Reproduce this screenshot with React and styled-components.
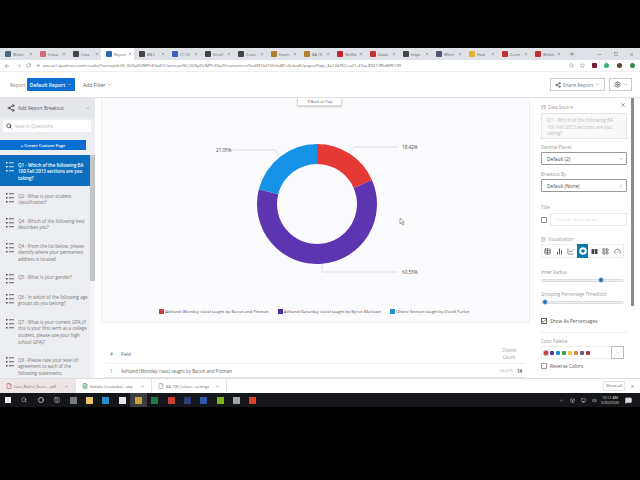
import styled, { createGlobalStyle } from 'styled-components';
import { ArrowLeft, ArrowRight, RotateCw, Lock, Star, Search, Share2, Settings, ChevronDown, X, Plus, Minus, Square, Table, BarChart2, LineChart, LayoutGrid, Gauge, Database, Check, ChevronUp, Circle, Monitor, Volume2, MessageSquare, File, FileText, Image, Columns2, Box } from 'lucide-react';

const GlobalStyle = createGlobalStyle`
  html, body { margin: 0; padding: 0; background: #000; }
  * { box-sizing: border-box; }
  body { font-family: "Open Sans", "Liberation Sans", sans-serif; }
`;

const tabs = [
  ['Webvi', '#4a6a7a', 35], ['Inbox', '#d66a7a', 33], ['Cesa', '#444', 33], ['Report', '#2a6ab0', 33],
  ['BB L', '#444', 33], ['(1) 15', '#3a62c0', 33], ['Enroll', '#444', 33], ['Cours', '#444', 33],
  ['Exam', '#b08030', 33], ['BA 10', '#b08030', 33], ['Netflix', '#c02030', 33], ['Goals', '#c03030', 33],
  ['https', '#444', 33], ['When', '#557', 33], ['How', '#e8b030', 33], ['Zoom', '#c03030', 33], ['Webin', '#c03030', 33],
];

const questions = [
  { id: 1, text: 'Q1 - Which of the following BA 100 Fall 2013 sections are you taking?', active: true },
  { id: 2, text: 'Q2 - What is your student classification?', gap: 7 },
  { id: 3, text: 'Q4 - Which of the following best describes you?', gap: 11.6 },
  { id: 4, text: 'Q4 - From the list below, please identify where your permanent address is located', gap: 11.6 },
  { id: 5, text: 'Q5 - What is your gender?', gap: 11.2 },
  { id: 6, text: 'Q6 - In which of the following age groups do you belong?', gap: 13 },
  { id: 7, text: 'Q7 - What is your current GPA (if this is your first term as a college student, please use your high school GPA)?', gap: 11.6 },
  { id: 8, text: 'Q8 - Please rate your level of agreement to each of the following statements', gap: 11.3 },
];

const palette = ['#c8413a', '#5b35a5', '#1a8fdc', '#3f9a55', '#f2c744', '#e08a3c', '#5a6470', '#b5305a'];
const taskIcons = ['#777b80', '#e9c46a', '#2a8fc8', '#e8e8e8', '#c9a13a', '#1f7a45', '#c8402e', '#2a3f7a', '#2a5aa8', '#7ab51d', '#9aa5ad', '#d8432e'];

// donut centre inside the chart svg
const CX = 215;
const CY = 106;

function polar(r, pct) {
  const a = (pct / 100) * Math.PI * 2;
  return [CX + r * Math.sin(a), CY - r * Math.cos(a)];
}

function slice(from, to) {
  const [a, b] = polar(60, from);
  const [c, d] = polar(60, to);
  const [e, f] = polar(40, to);
  const [g, h] = polar(40, from);
  const large = to - from > 50 ? 1 : 0;
  return `M${a} ${b}A60 60 0 ${large} 1 ${c} ${d}L${e} ${f}A40 40 0 ${large} 0 ${g} ${h}Z`;
}

function ListIcon() {
  return (
    <svg width="9" height="11" viewBox="0 0 9 11">
      <g fill="currentColor">
        <rect x="0" y="1" width="1.5" height="1.5" />
        <rect x="0" y="5" width="1.5" height="1.5" />
        <rect x="0" y="9" width="1.5" height="1.5" />
        <rect x="3" y="1.4" width="5" height=".8" />
        <rect x="3" y="5.4" width="5" height=".8" />
        <rect x="3" y="9.4" width="5" height=".8" />
      </g>
    </svg>
  );
}

function DonutGlyph() {
  return (
    <svg width="8" height="8" viewBox="0 0 8 8">
      <circle cx="4" cy="4" r="2.800" fill="none" stroke="currentColor" strokeWidth="2" />
    </svg>
  );
}

function BlocksGlyph() {
  return (
    <svg width="7" height="7" viewBox="0 0 7 7">
      <rect x=".5" y="1" width="2.700" height="5" fill="currentColor" />
      <rect x="3.800" y="1" width="2.700" height="5" fill="currentColor" />
    </svg>
  );
}

export default function App() {
  return (
    <Screen>
      <GlobalStyle />
      <TopBlack />
      <TabStrip>
        {tabs.map(([label, color, w]) => (
          <Tab key={label} $active={label === 'Report'} $w={w}>
            <Favicon $color={color} />
            <TabLabel>{label}</TabLabel>
            <X size={4} strokeWidth={2} color="#555" />
          </Tab>
        ))}
        <NewTab><Plus size={6} color="#555" /></NewTab>
        <WindowControls>
          <Minus size={5} color="#555" />
          <Square size={4} color="#555" />
          <X size={5} color="#555" />
        </WindowControls>
      </TabStrip>
      <AddressBar>
        <Slot $w={13}><ArrowLeft size={6} color="#666" /></Slot>
        <Slot $w={11}><ArrowRight size={6} color="#aaa" /></Slot>
        <Slot $w={9}><RotateCw size={5} color="#666" /></Slot>
        <Slot $w={10}><Lock size={3} color="#555" /></Slot>
        <Url>asu.az1.qualtrics.com/results/?surveyId=SV_0U0pDUMfTrE0aiD#/surveys/SV_0U0pDUMfTrE0aiD/containers/5ed391b215fcfa481c6cbed5/pages/Page_6a12d762-ca21-47aa-8927-ff5d6ff5190</Url>
        <Spacer />
        <Slot $w={10}><Search size={5} color="#777" /></Slot>
        <Slot $w={12}><Star size={5} color="#777" /></Slot>
        <Slot $w={12}><ExtIcon $color="#7a1f2a" /></Slot>
        <Slot $w={12}><ExtIcon $color="#3aae78" $round /></Slot>
        <Slot $w={14}><ExtIcon $color="#5a4632" $round /></Slot>
        <Slot $w={12}><ExtIcon $color="#2a8a4a" $round /></Slot>
        <Slot $w={2} />
      </AddressBar>
      <Toolbar>
        <ToolLabel>Report</ToolLabel>
        <PrimaryButton>Default Report <ChevronDown size={5} /></PrimaryButton>
        <FilterButton>Add Filter <ChevronDown size={5} /></FilterButton>
        <Spacer />
        <OutlineButton $w={55}><Share2 size={6} color="#333" /> Share Report <ChevronDown size={5} /></OutlineButton>
        <OutlineButton $w={23}><Settings size={7} color="#333" /> <ChevronDown size={5} /></OutlineButton>
      </Toolbar>
      <Body>
        <Sidebar>
          <BreakoutRow>
            <Share2 size={8} color="#333" />
            <span>Add Report Breakout</span>
            <Spacer />
            <ChevronDown size={5} color="#777" />
          </BreakoutRow>
          <SearchBox><Search size={6} color="#333" strokeWidth={3} /><span>Search Questions</span></SearchBox>
          <CreateButton>+ Create Custom Page</CreateButton>
          <QuestionList>
            <Questions>
              {questions.map((q) => (
                <Question key={q.id} $active={q.active} $gap={q.gap}>
                  <ListIcon />
                  <span>{q.text}</span>
                </Question>
              ))}
            </Questions>
            <ScrollTrack><ScrollThumb /></ScrollTrack>
          </QuestionList>
        </Sidebar>
        <Main>
          <ChartCard>
            <BackToTop>⇑ Back to Top</BackToTop>
            <DonutBox>
              <svg width="428" height="206" viewBox="0 0 428 206">
                <path d={slice(0, 18.42)} fill="#e53935" />
                <path d={slice(18.42, 78.95)} fill="#5e35b1" />
                <path d={slice(78.95, 100)} fill="#1592e6" />
                <g fill="none" stroke="#ccc" strokeWidth=".6">
                  <path d="M248 54 L252 49 H296" />
                  <path d="M177 58 L173 52 H131" />
                  <path d="M220 166 V174 H295" />
                </g>
                <g fontFamily="Open Sans" fontSize="4.600" fill="#444">
                  <text x="300" y="51">18.42%</text>
                  <text x="114" y="54">21.05%</text>
                  <text x="300" y="176">60.53%</text>
                </g>
                <path d="M298 120 v6 l1.500-1.500 l1.200 2.500 l1-.5 l-1.200-2.400 h2z" fill="#fff" stroke="#555" strokeWidth=".5" />
              </svg>
            </DonutBox>
            <Legend>
              <LegendItem $color="#c8413a">Ashland (Monday class) taught by Bacon and Pittman</LegendItem>
              <LegendItem $color="#4a2d90">Ashland (Saturday class) taught by Byron Marlowe</LegendItem>
              <LegendItem $color="#1a8fc8">Online Section taught by David Parker</LegendItem>
            </Legend>
          </ChartCard>
          <ResultTable>
            <HeadRow>
              <NumCell>#</NumCell>
              <FieldCell>Field</FieldCell>
              <CountHead>Choice<br />Count</CountHead>
            </HeadRow>
            <DataRow>
              <NumCell>1</NumCell>
              <FieldCell>Ashland (Monday class) taught by Bacon and Pittman</FieldCell>
              <Percent>18.42%</Percent>
              <Count>14</Count>
            </DataRow>
          </ResultTable>
        </Main>
        <Panel>
          <CloseSlot><X size={6} color="#555" /></CloseSlot>
          <PanelLabel><Database size={5} /> Data Source</PanelLabel>
          <DisabledBox>Q1 - Which of the following BA 100 Fall 2013 sections are you taking?<DisabledCaret><ChevronDown size={4} /></DisabledCaret></DisabledBox>
          <PanelLabel $top={5}>Decimal Places</PanelLabel>
          <SelectBox>Default (2)<ChevronDown size={4} /></SelectBox>
          <PanelLabel $top={6}>Breakout By</PanelLabel>
          <SelectBox>Default (None)<ChevronDown size={4} /></SelectBox>
          <PanelLabel $top={12}>Title</PanelLabel>
          <TitleRow>
            <CheckBox />
            <TitleInput>Default - Value as set</TitleInput>
          </TitleRow>
          <PanelLabel $top={10}><Image size={5} /> Visualization</PanelLabel>
          <VizBar>
            <VizCell><Table size={7} /></VizCell>
            <VizCell><BarChart2 size={7} strokeWidth={3} /></VizCell>
            <VizCell><LineChart size={7} /></VizCell>
            <VizCell $active><DonutGlyph /></VizCell>
            <VizCell><BlocksGlyph /></VizCell>
            <VizCell><LayoutGrid size={7} /></VizCell>
            <VizCell><Gauge size={7} /></VizCell>
          </VizBar>
          <PanelLabel $top={11}>Inner Radius</PanelLabel>
          <Slider><Knob $pos={69} /></Slider>
          <PanelLabel $top={9}>Grouping Percentage Threshold</PanelLabel>
          <Slider><Knob $pos={0} /></Slider>
          <CheckRow $top={13.5}><CheckBox $on><Check size={6} strokeWidth={3} /></CheckBox>Show As Percentages</CheckRow>
          <Divider />
          <PanelLabel $top={5}>Color Palette</PanelLabel>
          <PaletteRow>
            <Swatches>
              {palette.map((c, i) => <Swatch key={c} $color={c} $first={i === 0} />)}
            </Swatches>
            <PaletteCaret><ChevronDown size={4} /></PaletteCaret>
          </PaletteRow>
          <CheckRow $top={3}><CheckBox />Reverse Colors</CheckRow>
        </Panel>
        <PanelScroll><PanelThumb /></PanelScroll>
      </Body>
      <DownloadBar>
        <DownloadItem $w={76} $pink><File size={6} color="#c0392b" /><span>Cass_Rachel_Score....pdf</span><ChevronUp size={5} /></DownloadItem>
        <DownloadItem $w={76}><FileText size={6} color="#1f7a45" /><span>Sample Crosstabul....xlsx</span><ChevronUp size={5} /></DownloadItem>
        <DownloadItem $w={75}><File size={6} color="#888" /><span>BA_100_Colour....settings</span><ChevronUp size={5} /></DownloadItem>
        <Spacer />
        <ShowAll>Show all</ShowAll>
        <X size={5} color="#555" />
      </DownloadBar>
      <Taskbar>
        <TaskSlot><WinLogo /></TaskSlot>
        <TaskSlot><Search size={6} color="#ddd" /></TaskSlot>
        <TaskSlot><Circle size={6} color="#ddd" strokeWidth={3} /></TaskSlot>
        <TaskSlot><Columns2 size={6} color="#ddd" /></TaskSlot>
        {taskIcons.map((c, i) => <TaskSlot key={i} $active={i === 4}><TaskIcon $color={c} /></TaskSlot>)}
        <Spacer />
        <Slot $w={11}><ChevronUp size={5} color="#ddd" /></Slot>
        <Slot $w={11}><Box size={5} color="#ddd" /></Slot>
        <Slot $w={11}><Monitor size={5} color="#ddd" /></Slot>
        <Slot $w={10}><Volume2 size={5} color="#ddd" /></Slot>
        <Clock>10:12 AM<br />5/30/2020</Clock>
        <Slot $w={14}><MessageSquare size={7} color="#ddd" fill="#ddd" /></Slot>
        <Slot $w={5} />
      </Taskbar>
    </Screen>
  );
}

const Screen = styled.div`
  width: 640px;
  height: 480px;
  overflow: hidden;
  background: #000;
  display: flex;
  flex-direction: column;
`;

const TopBlack = styled.div`
  height: 48px;
  flex: none;
`;

const TabStrip = styled.div`
  height: 12px;
  flex: none;
  background: #dee1e6;
  display: flex;
  align-items: center;
`;

const Tab = styled.div`
  width: ${({ $w }) => $w}px;
  height: 12px;
  flex: none;
  padding: 0 2px 0 5px;
  display: flex;
  align-items: center;
  gap: 2px;
  background: ${({ $active }) => ($active ? '#fff' : 'transparent')};

  svg {
    flex: none;
  }
`;

const Favicon = styled.span`
  width: 6px;
  height: 6px;
  flex: none;
  border-radius: 1px;
  background: ${({ $color }) => $color};
`;

const TabLabel = styled.span`
  flex: 1;
  font-size: 3.800px;
  color: #666;
  white-space: nowrap;
`;

const NewTab = styled.span`
  margin-left: 6px;
  display: flex;
`;

const WindowControls = styled.div`
  margin: 0 6px 0 auto;
  width: 37px;
  display: flex;
  justify-content: space-between;
  align-items: center;
`;

const AddressBar = styled.div`
  height: 12px;
  flex: none;
  background: #fff;
  display: flex;
  align-items: center;
  border-bottom: 1px solid #eee;
`;

const Slot = styled.span`
  width: ${({ $w }) => $w}px;
  flex: none;
  display: flex;
  align-items: center;
  justify-content: center;
`;

const Url = styled.div`
  flex: none;
  font-size: 4.100px;
  color: #666;
  white-space: nowrap;
`;

const ExtIcon = styled.span`
  width: 5px;
  height: 5px;
  flex: none;
  background: ${({ $color }) => $color};
  border-radius: ${({ $round }) => ($round ? '50%' : '1px')};
`;

const Toolbar = styled.div`
  height: 25px;
  flex: none;
  background: #fff;
  display: flex;
  align-items: center;
  padding: 0 8px 0 10px;
  font-size: 5px;
`;

const ToolLabel = styled.span`
  color: #888;
  width: 17px;
`;

const PrimaryButton = styled.div`
  width: 48px;
  height: 13px;
  background: #0b6ed0;
  color: #fff;
  font-weight: 600;
  border-radius: 1px;
  display: flex;
  align-items: center;
  justify-content: center;
  gap: 2px;
`;

const FilterButton = styled.div`
  margin-left: 8px;
  color: #555;
  display: flex;
  align-items: center;
  gap: 2px;
`;

const Spacer = styled.div`
  flex: 1;
`;

const OutlineButton = styled.div`
  width: ${({ $w }) => $w}px;
  height: 13px;
  margin-left: 4px;
  border: 1px solid #ccc;
  color: #777;
  display: flex;
  align-items: center;
  justify-content: center;
  gap: 2px;
`;

const Body = styled.div`
  height: 281px;
  flex: none;
  background: #fff;
  display: flex;
  border-top: 1px solid #e4e4e8;
`;

const Sidebar = styled.aside`
  width: 95px;
  flex: none;
  background: #eceef1;
  display: flex;
  flex-direction: column;
  min-height: 0;
`;

const BreakoutRow = styled.div`
  height: 20px;
  flex: none;
  padding: 0 5px 0 7px;
  background: #e6e7ea;
  display: flex;
  align-items: center;
  gap: 3px;
  font-size: 4.700px;
  color: #555;
`;

const SearchBox = styled.div`
  margin: 2px 4px 0 3px;
  height: 12px;
  flex: none;
  background: #fff;
  display: flex;
  align-items: center;
  gap: 3px;
  padding-left: 3px;
  font-size: 4.700px;
  color: #bbb;
`;

const CreateButton = styled.div`
  margin: 8px 9px 0 0;
  height: 10px;
  flex: none;
  background: #0b6ed0;
  color: #fff;
  font-size: 4.200px;
  font-weight: 600;
  display: flex;
  align-items: center;
  justify-content: center;
`;

const QuestionList = styled.div`
  flex: 1;
  min-height: 0;
  margin-top: 5px;
  display: flex;
  overflow: hidden;
`;

const Questions = styled.div`
  width: 90px;
  flex: none;
`;

const Question = styled.div`
  display: flex;
  gap: 3px;
  margin-top: ${({ $gap }) => $gap || 0}px;
  padding: ${({ $active }) => ($active ? '6.500px 0 4px 6px' : '0 0 0 6px')};
  background: ${({ $active }) => ($active ? '#0b6ebd' : 'transparent')};
  color: ${({ $active }) => ($active ? '#fff' : '#777')};
  font-size: 4.500px;
  line-height: 6.700px;
  font-weight: ${({ $active }) => ($active ? 600 : 400)};

  svg {
    flex: none;
    margin: -1px 0 -4px;
    color: ${({ $active }) => ($active ? '#fff' : '#444')};
  }
`;

const ScrollTrack = styled.div`
  width: 5px;
  background: #f4f4f6;
  margin-top: -15px;
`;

const ScrollThumb = styled.div`
  height: 141px;
  background: #c4c5c9;
`;

const Main = styled.main`
  flex: 1;
  min-width: 0;
  padding-left: 6px;
  display: flex;
  flex-direction: column;
`;

const ChartCard = styled.section`
  position: relative;
  width: 429px;
  height: 225px;
  flex: none;
  background: #fbfbfe;
  border: 1px solid #eeeef2;
  border-top: 0;
  display: flex;
  flex-direction: column;
`;

const BackToTop = styled.div`
  position: absolute;
  top: 0;
  left: 195px;
  width: 45px;
  height: 8px;
  background: #fff;
  border: 1px solid #ddd;
  border-top: 0;
  box-shadow: 0 1px 2px rgba(0, 0, 0, .2);
  font-size: 4px;
  color: #555;
  text-align: center;
  line-height: 7px;
`;

const DonutBox = styled.div`
  height: 206px;
  flex: none;
`;

const Legend = styled.div`
  display: flex;
  justify-content: center;
  gap: 9px;
  margin-top: 5px;
  padding-right: 2px;
`;

const LegendItem = styled.div`
  display: flex;
  align-items: center;
  gap: 1px;
  font-size: 4.200px;
  color: #555;
  white-space: nowrap;

  &::before {
    content: '';
    width: 5px;
    height: 5px;
    background: ${({ $color }) => $color};
  }
`;

const ResultTable = styled.div`
  width: 420px;
  margin: 21px 0 0 4px;
  font-size: 4.500px;
  color: #666;
`;

const HeadRow = styled.div`
  height: 20px;
  display: flex;
  align-items: center;
  border-bottom: 1px solid #eee;
`;

const DataRow = styled.div`
  height: 14px;
  display: flex;
  align-items: center;
  border-bottom: 1px solid #e4e4e4;
`;

const NumCell = styled.span`
  width: 16px;
  padding-left: 5px;
  color: #888;
`;

const FieldCell = styled.span`
  flex: 1;
`;

const CountHead = styled.span`
  width: 22px;
  margin-right: 5px;
  text-align: center;
  line-height: 7px;
  color: #999;
`;

const Percent = styled.span`
  color: #aaa;
  font-size: 4.200px;
  margin-right: 4px;
`;

const Count = styled.span`
  width: 8px;
  font-weight: 600;
  color: #333;
`;

const Panel = styled.aside`
  position: relative;
  width: 98px;
  flex: none;
  padding: 6px 4px 0 8px;
  background: #fff;
  display: flex;
  flex-direction: column;
`;

const CloseSlot = styled.div`
  position: absolute;
  top: 4px;
  right: 5px;
  line-height: 0;
`;

const PanelLabel = styled.div`
  margin-top: ${({ $top }) => $top || 0}px;
  height: 6px;
  flex: none;
  font-size: 4.400px;
  line-height: 6px;
  color: #999;
  display: flex;
  align-items: center;
  gap: 2px;
`;

const DisabledBox = styled.div`
  position: relative;
  margin-top: 3px;
  height: 26px;
  flex: none;
  padding: 3px 4px 0 5px;
  border: 1px solid #e4e4e4;
  border-radius: 1px;
  background: #f9f9fa;
  font-size: 4.700px;
  line-height: 6.500px;
  color: #bbb;
`;

const DisabledCaret = styled.span`
  position: absolute;
  right: 2px;
  top: 11px;
`;

const SelectBox = styled.div`
  margin-top: 2px;
  height: 13px;
  flex: none;
  padding: 0 3px 0 5px;
  border: 1px solid #999;
  border-radius: 1px;
  display: flex;
  align-items: center;
  justify-content: space-between;
  font-size: 4.800px;
  color: #444;
`;

const TitleRow = styled.div`
  margin-top: 3px;
  display: flex;
  align-items: center;
  gap: 3px;
`;

const CheckBox = styled.span`
  width: 6px;
  height: 6px;
  flex: none;
  border: 1px solid ${({ $on }) => ($on ? '#666' : '#999')};
  display: flex;
  align-items: center;
  justify-content: center;
  color: #444;

  svg {
    flex: none;
  }
`;

const TitleInput = styled.div`
  flex: 1;
  height: 13px;
  border: 1px solid #e8e8e8;
  padding-left: 5px;
  font-size: 4.200px;
  line-height: 11px;
  color: #d8d8d8;
`;

const VizBar = styled.div`
  margin-top: 2px;
  width: 83px;
  height: 14px;
  flex: none;
  border: 1px solid #eee;
  display: flex;
  align-items: center;
`;

const VizCell = styled.span`
  flex: 1;
  height: 14px;
  display: flex;
  align-items: center;
  justify-content: center;
  background: ${({ $active }) => ($active ? '#0a78a8' : 'transparent')};
  color: ${({ $active }) => ($active ? '#fff' : '#444')};
`;

const Slider = styled.div`
  position: relative;
  margin-top: 4px;
  width: 83px;
  height: 3px;
  flex: none;
  border: 1px solid #ddd;
  border-radius: 2px;
  background: #f0f0f0;
`;

const Knob = styled.span`
  position: absolute;
  top: -3px;
  left: ${({ $pos }) => $pos}%;
  width: 6px;
  height: 6px;
  border-radius: 50%;
  background: #1a6fb8;
  border: 1.500px solid #cfe0ee;
`;

const CheckRow = styled.div`
  margin-top: ${({ $top }) => $top}px;
  height: 7px;
  flex: none;
  display: flex;
  align-items: center;
  gap: 3px;
  font-size: 4.800px;
  color: #555;
`;

const Divider = styled.div`
  margin-top: 7.500px;
  height: 1px;
  flex: none;
  background: #eee;
`;

const PaletteRow = styled.div`
  margin-top: 2px;
  width: 83px;
  height: 13px;
  flex: none;
  display: flex;
  border: 1px solid #eee;
`;

const Swatches = styled.div`
  flex: 1;
  display: flex;
  align-items: center;
  gap: 2px;
  padding-left: 2px;
`;

const Swatch = styled.span`
  width: 4px;
  height: 4px;
  border-radius: 1px;
  background: ${({ $color }) => $color};
  outline: ${({ $first }) => ($first ? '1px solid #bbb' : 'none')};
`;

const PaletteCaret = styled.span`
  width: 13px;
  border: 1px solid #bbb;
  margin: -1px;
  display: flex;
  align-items: center;
  justify-content: center;
  color: #777;
`;

const PanelScroll = styled.div`
  width: 9px;
  flex: none;
  background: #fff;
`;

const PanelThumb = styled.div`
  width: 3px;
  height: 208px;
  background: #8c8c8c;
`;

const DownloadBar = styled.div`
  height: 15px;
  flex: none;
  background: #fff;
  border-top: 1px solid #ddd;
  display: flex;
  align-items: center;
  padding-right: 5px;
`;

const DownloadItem = styled.div`
  width: ${({ $w }) => $w}px;
  height: 14px;
  flex: none;
  padding: 0 6px;
  display: flex;
  align-items: center;
  gap: 2px;
  font-size: 3.700px;
  color: #666;
  background: ${({ $pink }) => ($pink ? '#eee6e6' : 'transparent')};
  border-right: 1px solid #e4e4e4;

  span {
    flex: 1;
    white-space: nowrap;
  }

  svg {
    flex: none;
  }
`;

const ShowAll = styled.div`
  width: 22px;
  height: 10px;
  margin-right: 5px;
  border: 1px solid #e4e4e4;
  font-size: 4.200px;
  line-height: 8px;
  text-align: center;
  color: #666;
`;

const Taskbar = styled.div`
  height: 14px;
  flex: none;
  background: #14161a;
  display: flex;
  align-items: center;
`;

const TaskSlot = styled.span`
  width: 16.300px;
  height: 14px;
  flex: none;
  display: flex;
  align-items: center;
  justify-content: center;
  background: ${({ $active }) => ($active ? '#3a3c40' : 'transparent')};
`;

const WinLogo = styled.span`
  width: 6px;
  height: 6px;
  background: #e8e8e8;
`;

const TaskIcon = styled.span`
  width: 7px;
  height: 7px;
  background: ${({ $color }) => $color};
`;

const Clock = styled.div`
  width: 22px;
  flex: none;
  font-size: 3.800px;
  line-height: 5px;
  color: #ddd;
  text-align: center;
`;
